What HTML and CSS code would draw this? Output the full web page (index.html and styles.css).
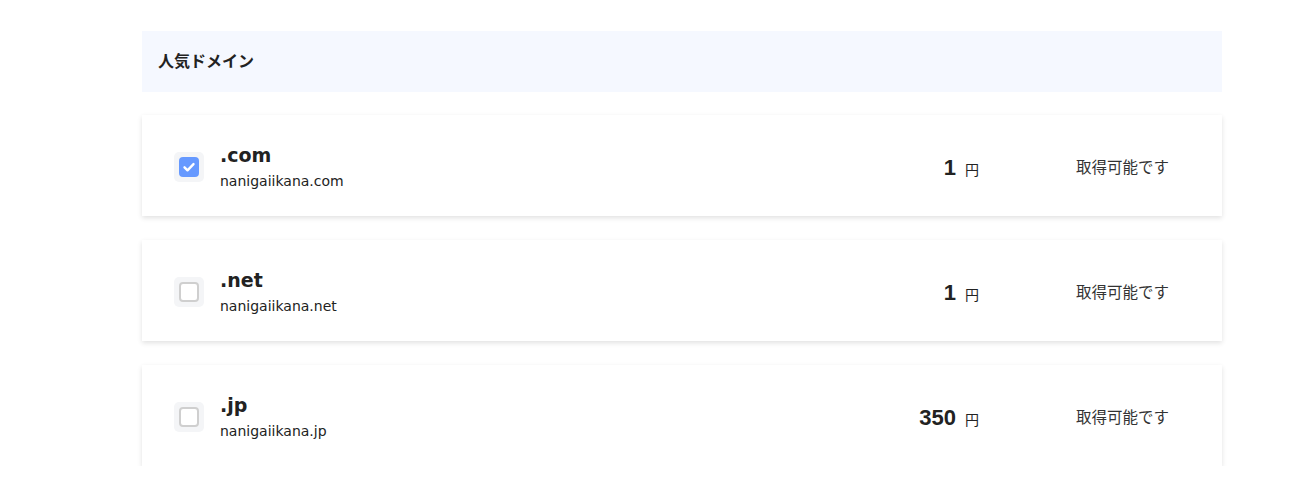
FILE: index.html
```html
<!DOCTYPE html>
<html lang="ja">
<head>
<meta charset="utf-8">
<link rel="stylesheet" href="styles.css">
</head>
<body>
<div class="wrap">
  <div class="section-head">人気ドメイン</div>
  <div class="list">
    <div class="card">
      <div class="check-wrap"><span class="check checked"><svg viewBox="0 0 20 20" width="20" height="20"><path d="M5.5 10.3l3 3 6-6.2" fill="none" stroke="#fff" stroke-width="2.4" stroke-linecap="round" stroke-linejoin="round"/></svg></span></div>
      <div class="name">
        <div class="tld">.com</div>
        <div class="domain">nanigaiikana.com</div>
      </div>
      <div class="price"><span class="num">1</span><span class="yen">円</span></div>
      <div class="status">取得可能です</div>
    </div>
    <div class="card">
      <div class="check-wrap"><span class="check"></span></div>
      <div class="name">
        <div class="tld">.net</div>
        <div class="domain">nanigaiikana.net</div>
      </div>
      <div class="price"><span class="num">1</span><span class="yen">円</span></div>
      <div class="status">取得可能です</div>
    </div>
    <div class="card">
      <div class="check-wrap"><span class="check"></span></div>
      <div class="name">
        <div class="tld">.jp</div>
        <div class="domain">nanigaiikana.jp</div>
      </div>
      <div class="price"><span class="num">350</span><span class="yen">円</span></div>
      <div class="status">取得可能です</div>
    </div>
  </div>
</div>
</body>
</html>
```
FILE: styles.css
```css
* { box-sizing: border-box; }
html, body { margin: 0; padding: 0; background: #fff; }
body {
  font-family: "DejaVu Sans", "Noto Sans CJK JP", sans-serif;
  color: #222;
}
.wrap {
  width: 1080px;
  margin-left: 142px;
  padding-top: 31px;
}
.section-head {
  height: 61px;
  background: #f5f8ff;
  display: flex;
  align-items: center;
  padding-left: 16px;
  padding-bottom: 3px;
  font-family: "Noto Sans CJK JP", sans-serif;
  font-weight: 700;
  font-size: 16px;
  color: #222;
}
.list {
  display: flex;
  flex-direction: column;
  gap: 24px;
  margin-top: 23px;
}
.card {
  height: 101px;
  background: #fff;
  box-shadow: 0 2px 5px rgba(0,0,0,0.12);
  display: flex;
  align-items: center;
  padding: 0 32px;
}
.check-wrap {
  width: 30px;
  height: 30px;
  background: #f4f5f7;
  border-radius: 5px;
  display: flex;
  align-items: center;
  justify-content: center;
  margin-right: 16px;
  margin-top: 2px;
}
.check {
  width: 20px;
  height: 20px;
  border-radius: 4px;
  border: 2px solid #cfcfcf;
  background: #fff;
  display: flex;
  align-items: center;
  justify-content: center;
}
.check.checked {
  background: #6699ff;
  border: none;
}
.name { flex: 1; margin-top: 2px; }
.tld {
  font-size: 19px;
  font-weight: 700;
  line-height: 24px;
  color: #222;
}
.domain {
  font-size: 14px;
  line-height: 20px;
  margin-top: 4px;
  color: #222;
}
.price {
  display: flex;
  align-items: baseline;
  margin-top: 4px;
}
.num {
  font-family: "Liberation Sans", sans-serif;
  font-size: 22px;
  font-weight: 700;
  color: #222;
}
.yen {
  font-family: "Noto Sans CJK JP", sans-serif;
  font-size: 14px;
  margin-left: 9px;
  color: #222;
}
.status {
  width: 114px;
  margin-left: 97px;
  font-family: "Noto Sans CJK JP", sans-serif;
  font-size: 15.5px;
  color: #333;
}
```
